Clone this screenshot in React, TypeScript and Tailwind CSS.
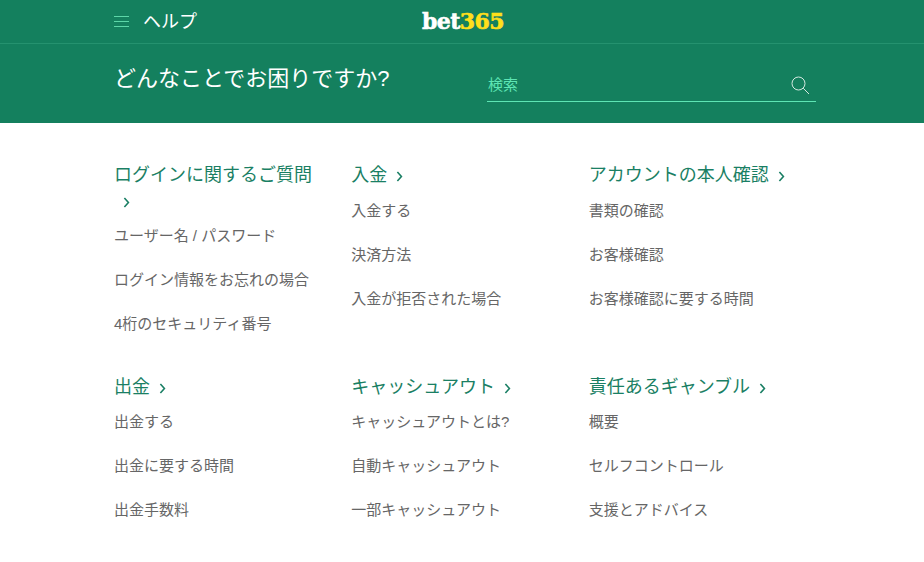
const sections = [
  { title: 'ログインに関するご質問', links: ['ユーザー名 / パスワード', 'ログイン情報をお忘れの場合', '4桁のセキュリティ番号'] },
  { title: '入金', links: ['入金する', '決済方法', '入金が拒否された場合'] },
  { title: 'アカウントの本人確認', links: ['書類の確認', 'お客様確認', 'お客様確認に要する時間'] },
  { title: '出金', links: ['出金する', '出金に要する時間', '出金手数料'] },
  { title: 'キャッシュアウト', links: ['キャッシュアウトとは?', '自動キャッシュアウト', '一部キャッシュアウト'] },
  { title: '責任あるギャンブル', links: ['概要', 'セルフコントロール', '支援とアドバイス'] },
]

function Chevron() {
  return (
    <svg width="7" height="11" viewBox="0 0 7 11" fill="none" className="ml-[9px] inline-block align-[-1px]">
      <path d="M1.4 1 L5.4 5.5 L1.4 10" stroke="#1a7f64" strokeWidth="1.6" />
    </svg>
  )
}

export default function App() {
  return (
    <div className="min-h-[562px] bg-white font-['Liberation_Sans','Noto_Sans_CJK_JP',sans-serif]">
      <header className="bg-[#14805e]">
        <div className="relative flex h-11 items-center border-b border-[#25926f] pl-[114px]">
          <div className="flex w-[15px] flex-col gap-[4px]">
            <span className="h-px bg-[#5dd6a8]" />
            <span className="h-px bg-[#5dd6a8]" />
            <span className="h-px bg-[#5dd6a8]" />
          </div>
          <span className="ml-[14px] pt-[2px] text-[18px] text-white">ヘルプ</span>
          <div className="absolute left-[422px] top-[5px] font-['DejaVu_Serif'] text-[22px] font-bold leading-8 tracking-[-0.6px] [-webkit-text-stroke:0.6px_currentColor]">
            <span className="text-white">bet</span>
            <span className="text-[#ffdf1b]">365</span>
          </div>
        </div>
        <div className="flex h-[79px] pl-[114px]">
          <h1 className="w-[373px] pt-[19px] text-[22px] font-normal leading-8 text-white">どんなことでお困りですか?</h1>
          <div className="mt-[20px] flex h-[38px] w-[329px] items-center justify-between border-b border-[#5ee5b4] pl-px pr-[6px]">
            <span className="pt-[6px] text-[15px] text-[#5ee5b4]">検索</span>
            <svg width="20" height="20" viewBox="0 0 20 20" fill="none" className="mt-[4px]">
              <circle cx="8.5" cy="8.5" r="6.5" stroke="#d5e9e1" strokeWidth="1" />
              <path d="M13.2 13.2 L19 19" stroke="#d5e9e1" strokeWidth="1" />
            </svg>
          </div>
        </div>
      </header>
      <main className="grid w-[826px] grid-cols-3 gap-y-[37.5px] pl-[114px] pt-[40px]">
        {sections.map((s) => (
          <section key={s.title} className="pr-[26px]">
            <h2 className="text-[18px] font-normal leading-[25.5px] text-[#1a7f64]">
              {s.title}
              <Chevron />
            </h2>
            <ul className="mt-[9px] flex flex-col gap-[18px]">
              {s.links.map((l) => (
                <li key={l} className="text-[15px] leading-[26px] text-[#666666]">
                  {l}
                </li>
              ))}
            </ul>
          </section>
        ))}
      </main>
    </div>
  )
}
